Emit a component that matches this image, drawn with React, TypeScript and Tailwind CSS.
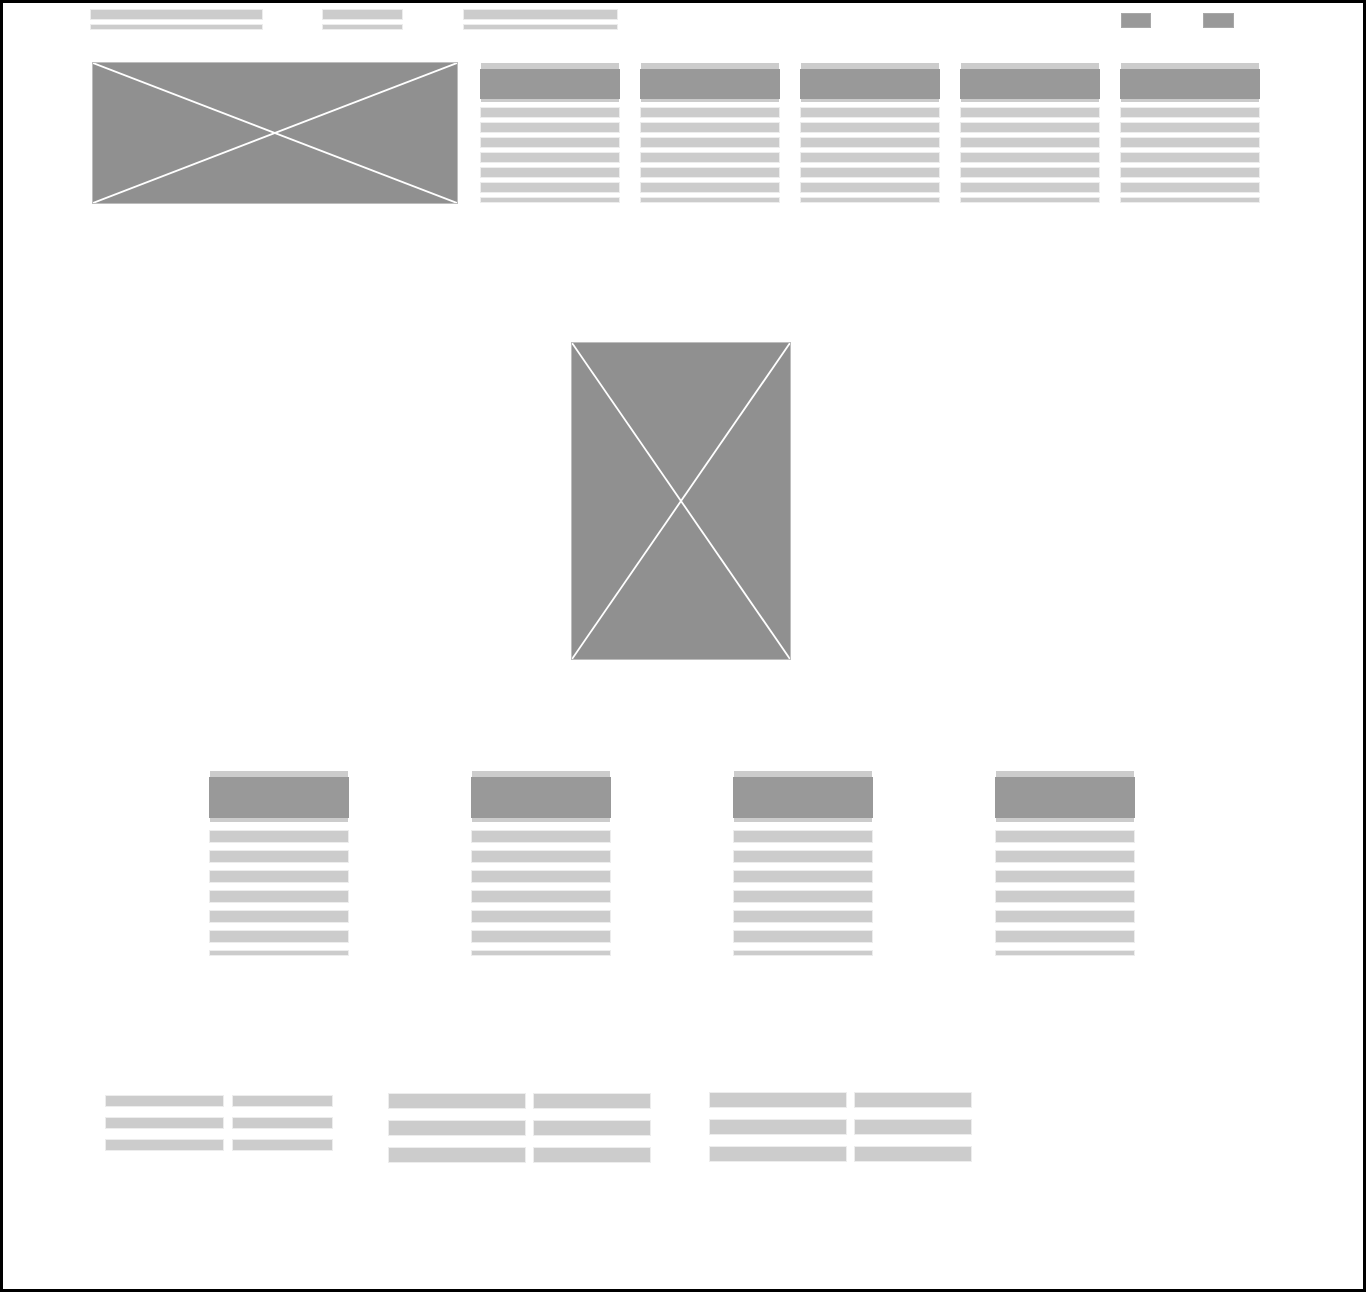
const bar = "bg-[#cccccc] ring-1 ring-[#ededed]";

function NavItem({ w }: { w: string }) {
  return (
    <div className={`flex flex-col gap-[6px] ${w}`}>
      <div className={`h-[9px] ${bar}`} />
      <div className={`h-[4px] ${bar}`} />
    </div>
  );
}

function Placeholder({ className }: { className: string }) {
  return (
    <div className={`border border-[#bdbdbd] bg-[#909090] ${className}`}>
      <svg className="block h-full w-full" viewBox="0 0 100 100" preserveAspectRatio="none">
        <line x1="0" y1="0" x2="100" y2="100" stroke="#ffffff" strokeWidth="1.8" vectorEffect="non-scaling-stroke" />
        <line x1="100" y1="0" x2="0" y2="100" stroke="#ffffff" strokeWidth="1.8" vectorEffect="non-scaling-stroke" />
      </svg>
    </div>
  );
}

function SmallCard() {
  return (
    <div className="flex w-[138px] flex-col gap-[6px]">
      <div className="bg-[#cccccc] pt-[6px] pb-[3px]">
        <div className="-mx-px h-[30px] bg-[#999999]" />
      </div>
      {[0, 1, 2, 3, 4, 5].map((i) => (
        <div key={i} className={`h-[9px] ${bar}`} />
      ))}
      <div className={`h-[4px] ${bar}`} />
    </div>
  );
}

function TallCard() {
  return (
    <div className="flex w-[138px] flex-col gap-[9px]">
      <div className="bg-[#cccccc] pt-[6px] pb-[4px]">
        <div className="-mx-px h-[41px] bg-[#999999]" />
      </div>
      {[0, 1, 2, 3, 4, 5].map((i) => (
        <div key={i} className={`h-[11px] ${bar}`} />
      ))}
      <div className={`h-[4px] ${bar}`} />
    </div>
  );
}

function Table({ a, b, h, gap, col, className }: { a: string; b: string; h: string; gap: string; col: string; className: string }) {
  return (
    <div className={`flex flex-col ${gap} ${className}`}>
      {[0, 1, 2].map((i) => (
        <div key={i} className={`flex ${col}`}>
          <div className={`${a} ${h} ${bar}`} />
          <div className={`${b} ${h} ${bar}`} />
        </div>
      ))}
    </div>
  );
}

export default function App() {
  return (
    <div className="h-[1292px] w-full overflow-hidden border-[3px] border-black bg-white">
      {/* header */}
      <header className="flex items-start pt-[7px] pl-[88px] pr-[129px]">
        <NavItem w="w-[171px]" />
        <div className="ml-[61px]">
          <NavItem w="w-[79px]" />
        </div>
        <div className="ml-[62px]">
          <NavItem w="w-[153px]" />
        </div>
        <div className="ml-auto mt-[3px] flex gap-[52px]">
          <div className="h-[15px] w-[30px] border border-[#a8a8a8] bg-[#999999]" />
          <div className="h-[15px] w-[31px] border border-[#a8a8a8] bg-[#999999]" />
        </div>
      </header>

      {/* hero row */}
      <section className="mt-[33px] flex items-start pl-[89px]">
        <Placeholder className="h-[142px] w-[366px]" />
        <div className="ml-[23px] mt-px flex gap-[22px]">
          <SmallCard />
          <SmallCard />
          <SmallCard />
          <SmallCard />
          <SmallCard />
        </div>
      </section>

      {/* center image */}
      <section className="mt-[138px] pl-[568px]">
        <Placeholder className="h-[318px] w-[220px]" />
      </section>

      {/* feature cards */}
      <section className="mt-[111px] flex gap-[124px] pl-[207px]">
        <TallCard />
        <TallCard />
        <TallCard />
        <TallCard />
      </section>

      {/* footer tables */}
      <footer className="mt-[138px] flex items-start pl-[103px]">
        <Table a="w-[117px]" b="w-[99px]" h="h-[10px]" gap="gap-[12px]" col="gap-[10px]" className="mt-[3px]" />
        <Table a="w-[136px]" b="w-[116px]" h="h-[14px]" gap="gap-[13px]" col="gap-[9px]" className="ml-[57px] mt-px" />
        <Table a="w-[136px]" b="w-[116px]" h="h-[14px]" gap="gap-[13px]" col="gap-[9px]" className="ml-[60px]" />
      </footer>
    </div>
  );
}
